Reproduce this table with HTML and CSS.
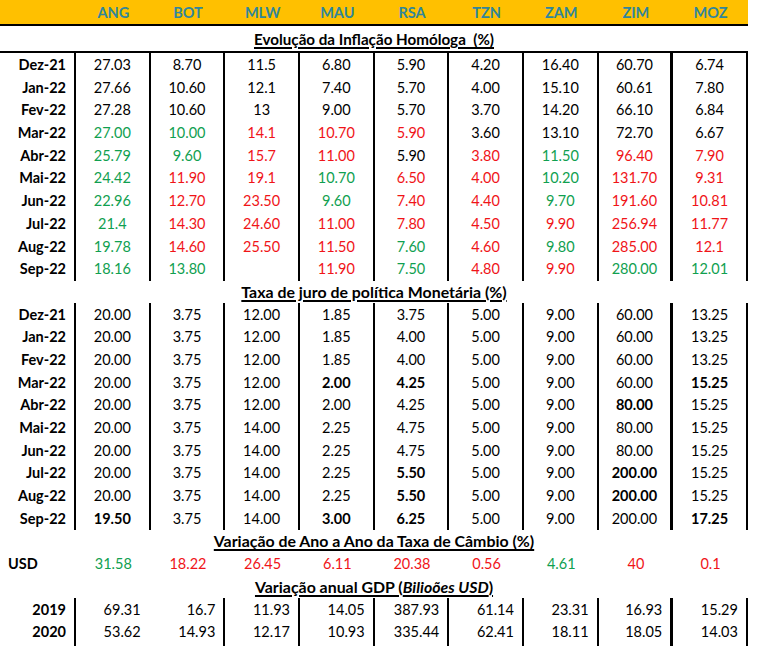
FILE: index.html
```html
<!DOCTYPE html>
<html lang="pt">
<head>
<meta charset="utf-8">
<title>Indicadores SADC</title>
<link rel="stylesheet" href="styles.css">
</head>
<body>
<div class="sheet">
  <div class="row head">
    <div></div><div>ANG</div><div>BOT</div><div>MLW</div><div>MAU</div><div>RSA</div><div>TZN</div><div>ZAM</div><div>ZIM</div><div>MOZ</div>
  </div>
  <div class="title first"><span>Evolução da Inflação Homóloga&nbsp; (%)</span></div>

  <div class="block top">
    <div class="row data"><div class="lbl">Dez-21</div><div>27.03</div><div>8.70</div><div>11.5</div><div>6.80</div><div>5.90</div><div>4.20</div><div>16.40</div><div class="zim">60.70</div><div>6.74</div></div>
    <div class="row data"><div class="lbl">Jan-22</div><div>27.66</div><div>10.60</div><div>12.1</div><div>7.40</div><div>5.70</div><div>4.00</div><div>15.10</div><div class="zim">60.61</div><div>7.80</div></div>
    <div class="row data"><div class="lbl">Fev-22</div><div>27.28</div><div>10.60</div><div>13</div><div>9.00</div><div>5.70</div><div>3.70</div><div>14.20</div><div class="zim">66.10</div><div>6.84</div></div>
    <div class="row data"><div class="lbl">Mar-22</div><div class="g">27.00</div><div class="g">10.00</div><div class="r">14.1</div><div class="r">10.70</div><div class="r">5.90</div><div>3.60</div><div>13.10</div><div class="zim">72.70</div><div>6.67</div></div>
    <div class="row data"><div class="lbl">Abr-22</div><div class="g">25.79</div><div class="g">9.60</div><div class="r">15.7</div><div class="r">11.00</div><div>5.90</div><div class="r">3.80</div><div class="g">11.50</div><div class="zim r">96.40</div><div class="r">7.90</div></div>
    <div class="row data"><div class="lbl">Mai-22</div><div class="g">24.42</div><div class="r">11.90</div><div class="r">19.1</div><div class="g">10.70</div><div class="r">6.50</div><div class="r">4.00</div><div class="g">10.20</div><div class="zim r">131.70</div><div class="r">9.31</div></div>
    <div class="row data"><div class="lbl">Jun-22</div><div class="g">22.96</div><div class="r">12.70</div><div class="r">23.50</div><div class="g">9.60</div><div class="r">7.40</div><div class="r">4.40</div><div class="g">9.70</div><div class="zim r">191.60</div><div class="r">10.81</div></div>
    <div class="row data"><div class="lbl">Jul-22</div><div class="g">21.4</div><div class="r">14.30</div><div class="r">24.60</div><div class="r">11.00</div><div class="r">7.80</div><div class="r">4.50</div><div class="r">9.90</div><div class="zim r">256.94</div><div class="r">11.77</div></div>
    <div class="row data"><div class="lbl">Aug-22</div><div class="g">19.78</div><div class="r">14.60</div><div class="r">25.50</div><div class="r">11.50</div><div class="g">7.60</div><div class="r">4.60</div><div class="g">9.80</div><div class="zim r">285.00</div><div class="r">12.1</div></div>
    <div class="row data"><div class="lbl">Sep-22</div><div class="g">18.16</div><div class="g">13.80</div><div></div><div class="r">11.90</div><div class="g">7.50</div><div class="r">4.80</div><div class="r">9.90</div><div class="zim g">280.00</div><div class="g">12.01</div></div>
  </div>

  <div class="title"><span>Taxa de juro de política Monetária (%)</span></div>

  <div class="block">
    <div class="row data"><div class="lbl">Dez-21</div><div>20.00</div><div>3.75</div><div>12.00</div><div>1.85</div><div>3.75</div><div>5.00</div><div>9.00</div><div class="zim">60.00</div><div>13.25</div></div>
    <div class="row data"><div class="lbl">Jan-22</div><div>20.00</div><div>3.75</div><div>12.00</div><div>1.85</div><div>4.00</div><div>5.00</div><div>9.00</div><div class="zim">60.00</div><div>13.25</div></div>
    <div class="row data"><div class="lbl">Fev-22</div><div>20.00</div><div>3.75</div><div>12.00</div><div>1.85</div><div>4.00</div><div>5.00</div><div>9.00</div><div class="zim">60.00</div><div>13.25</div></div>
    <div class="row data"><div class="lbl">Mar-22</div><div>20.00</div><div>3.75</div><div>12.00</div><div class="b">2.00</div><div class="b">4.25</div><div>5.00</div><div>9.00</div><div class="zim">60.00</div><div class="b">15.25</div></div>
    <div class="row data"><div class="lbl">Abr-22</div><div>20.00</div><div>3.75</div><div>12.00</div><div>2.00</div><div>4.25</div><div>5.00</div><div>9.00</div><div class="zim b">80.00</div><div>15.25</div></div>
    <div class="row data"><div class="lbl">Mai-22</div><div>20.00</div><div>3.75</div><div>14.00</div><div>2.25</div><div>4.75</div><div>5.00</div><div>9.00</div><div class="zim">80.00</div><div>15.25</div></div>
    <div class="row data"><div class="lbl">Jun-22</div><div>20.00</div><div>3.75</div><div>14.00</div><div>2.25</div><div>4.75</div><div>5.00</div><div>9.00</div><div class="zim">80.00</div><div>15.25</div></div>
    <div class="row data"><div class="lbl">Jul-22</div><div>20.00</div><div>3.75</div><div>14.00</div><div>2.25</div><div class="b">5.50</div><div>5.00</div><div>9.00</div><div class="zim b">200.00</div><div>15.25</div></div>
    <div class="row data"><div class="lbl">Aug-22</div><div>20.00</div><div>3.75</div><div>14.00</div><div>2.25</div><div class="b">5.50</div><div>5.00</div><div>9.00</div><div class="zim b">200.00</div><div>15.25</div></div>
    <div class="row data"><div class="lbl">Sep-22</div><div class="b">19.50</div><div>3.75</div><div>14.00</div><div class="b">3.00</div><div class="b">6.25</div><div>5.00</div><div>9.00</div><div class="zim">200.00</div><div class="b">17.25</div></div>
  </div>

  <div class="title"><span>Variação de Ano a Ano da Taxa de Câmbio (%)</span></div>

  <div class="row plain"><div class="lbl left">USD</div><div class="g">31.58</div><div class="r">18.22</div><div class="r">26.45</div><div class="r">6.11</div><div class="r">20.38</div><div class="r">0.56</div><div class="g">4.61</div><div class="r">40</div><div class="r">0.1</div></div>

  <div class="title"><span>Variação anual GDP (<i>Bilioões USD</i>)</span></div>

  <div class="block">
    <div class="row gdp"><div class="lbl">2019</div><div class="nob">69.31</div><div>16.7</div><div>11.93</div><div>14.05</div><div>387.93</div><div>61.14</div><div>23.31</div><div class="zim">16.93</div><div>15.29</div></div>
    <div class="row gdp"><div class="lbl">2020</div><div class="nob">53.62</div><div>14.93</div><div>12.17</div><div>10.93</div><div>335.44</div><div>62.41</div><div>18.11</div><div class="zim">18.05</div><div>14.03</div></div>
    <div class="row gdp"><div class="lbl"></div><div class="nob"></div><div></div><div></div><div></div><div></div><div></div><div></div><div class="zim"></div><div></div></div>
  </div>
</div>
</body>
</html>
```

FILE: styles.css
```css
html, body {
  margin: 0;
  padding: 0;
  background: #ffffff;
  overflow: hidden;
}

body {
  font-family: Lato, "Open Sans", "DejaVu Sans", sans-serif;
  font-size: 14.5px;
  color: #000000;
}

.sheet {
  width: 748px;
}

.row {
  display: grid;
  grid-template-columns: 76px repeat(9, 74.67px);
  height: 22.7px;
}

.row > div {
  box-sizing: border-box;
  line-height: 22.7px;
  padding-top: 1px;
  white-space: nowrap;
  text-align: center;
}

.head {
  height: 26px;
  box-sizing: border-box;
  background: #ffc000;
  border-bottom: 2px solid #000000;
  color: #31869b;
  font-weight: 700;
}

.head > div {
  line-height: 24px;
  padding-top: 1px;
}

.title {
  height: 22.7px;
  box-sizing: border-box;
  padding-top: 1px;
  line-height: 22.7px;
  text-align: center;
  font-weight: 700;
  font-size: 15.9px;
  white-space: nowrap;
}

.title.first {
  height: 25px;
  padding-top: 2px;
  line-height: 23px;
  font-size: 15.2px;
}

.title span {
  text-decoration: underline;
  text-decoration-thickness: 1.5px;
  text-underline-offset: 2px;
}

.block.top {
  border-top: 2px solid #000000;
}

.data > div,
.gdp > div {
  border-right: 2px solid #000000;
}

.data > div.zim,
.gdp > div.zim {
  border-right-width: 3px;
}

.gdp > div {
  text-align: right;
  padding-right: 8px;
}

.gdp > div.nob {
  border-right: none;
  padding-right: 10px;
}

.row > div.lbl {
  text-align: right;
  padding-right: 8px;
  font-weight: 700;
}

.row > div.lbl.left {
  text-align: left;
  padding-left: 8px;
}

.g {
  color: #10a050;
}

.r {
  color: #f01418;
}

.b {
  font-weight: 700;
}
```
